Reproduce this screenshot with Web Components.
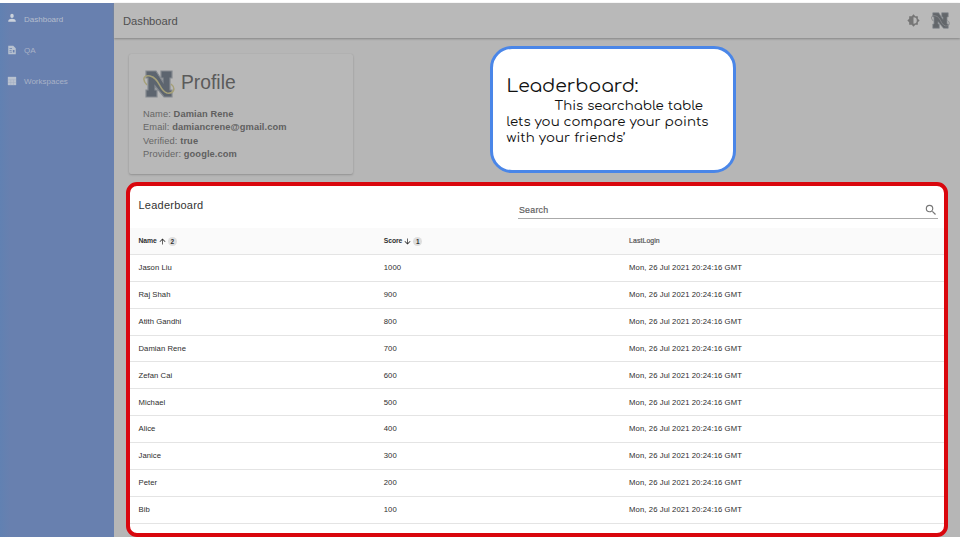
<!DOCTYPE html>
<html lang="en"><head><meta charset="utf-8"><title>Dashboard</title>
<style>
html,body{margin:0;width:960px;height:540px;overflow:hidden;background:#fff}
body{font-family:"Liberation Sans",Arial,sans-serif;position:relative}
</style></head><body>
<dashboard-app></dashboard-app>
<script>
const define=(name,html,setup)=>customElements.define(name,class extends HTMLElement{
  connectedCallback(){
    if(this.shadowRoot)return;
    this.attachShadow({mode:'open'}).innerHTML=html;
    if(setup)setup.call(this,this.shadowRoot);
  }
});

define('n-logo',`<style>:host{display:block;width:32px;height:32px;color:#5d656f}svg{display:block;width:100%;height:100%}</style>
<svg viewBox="0 0 32 32"><path d="M4 3h9l7 11V10h-2V3h11v7h-2v12h2v7h-8L12 18v4h2v7H3v-7h2V10H3V3Z" fill="currentColor" stroke="#858a90" stroke-width="1.2"/>
<path class="r" d="M4 17C-1 12 0 7 7 8C17 10 16 23 24 25C31 26 33 20 28 16" fill="none" stroke="#a5a078" stroke-width="1.5"/></svg>`,
function(r){if(this.hasAttribute('plain'))r.querySelector('.r').setAttribute('stroke','#85878a')});

const icons={
 person:'<path d="M12 12c2.2 0 4-1.8 4-4V6c0-2.200-1.800-4-4-4S8 3.800 8 6v2c0 2.200 1.800 4 4 4zm0 2c-4 0-9 2-9 5v2h18v-2c0-3-5-5-9-5z"/>',
 doc:'<path fill-rule="evenodd" d="M3 2h12l6 6v14H3zM6 7v2h6V7zm0 5v2h5v-2zm0 4v2h6v-2zm8-4v6h4v-6z"/>',
 grid:'<path d="M2 2h20v20H2z"/><path d="M2 9h20M2 15.500h20M9 9v13M15.500 9v13" fill="none" stroke="#9daac1" stroke-width="1"/>',
 bright:'<path d="M20 8.690V4h-4.690L12 .690 8.690 4H4v4.690L.690 12 4 15.310V20h4.690L12 23.310 15.310 20H20v-4.690L23.310 12z"/><path d="M12 6a6 6 0 0 1 0 12z" fill="#b9b9b9"/>',
 search:'<path d="M15.500 14h-.790l-.280-.270A6.470 6.470 0 0 0 16 9.500 6.500 6.500 0 1 0 9.500 16c1.610 0 3.090-.590 4.230-1.570l.270.280v.790l5 4.990L20.490 19zm-6 0a4.500 4.500 0 1 1 0-9 4.500 4.500 0 0 1 0 9z"/>',
 up:'<path d="M4 12l1.410 1.410L11 7.830V20h2V7.830l5.580 5.590L20 12l-8-8z"/>',
 down:'<path d="M20 12l-1.410-1.410L13 16.170V4h-2v12.170l-5.580-5.590L4 12l8 8z"/>'};
define('ui-icon',`<style>:host{display:block;flex:none;width:10px;height:10px}svg{display:block;width:100%;height:100%;fill:currentColor}</style><svg viewBox="0 0 24 24"></svg>`,
function(r){r.querySelector('svg').innerHTML=icons[this.getAttribute('name')]});

define('nav-item',`<style>:host{display:flex;box-sizing:border-box;align-items:center;height:31.400px;padding:0 0 1px 6.500px;gap:7.500px;color:#a8b2c7;font-size:8px;line-height:10px}ui-icon{color:#b9c2d0}span{padding-top:3px}:host([active]){color:#b4bdcd}:host([active]) ui-icon{color:#ccd2dc}</style><ui-icon></ui-icon><span><slot></slot></span>`,
function(r){r.querySelector('ui-icon').replaceWith(Object.assign(document.createElement('template'),{innerHTML:`<ui-icon name="${this.getAttribute('icon')}"></ui-icon>`}).content)});
define('side-nav',`<style>:host{display:block;box-sizing:border-box;background:linear-gradient(90deg,#6181b2,#6880af 9%,#6880af)}</style><slot></slot>`);
define('top-bar',`<style>:host{display:flex;box-sizing:border-box;height:35px;align-items:center;padding:0 10px 0 9px;background:#b9b9b9;box-shadow:0 1px 2px #858585;color:#505050;font-size:11.200px}span{flex:1}ui-icon{width:13px;height:13px;color:#767676;margin-right:11px}n-logo{width:19px;height:19px;color:#63676b}</style><span><slot></slot></span><ui-icon name="bright"></ui-icon><n-logo plain></n-logo>`);
define('profile-card',`<style>:host{display:block;box-sizing:border-box;width:224px;height:120px;padding:14px 14px;background:#b8b8b8;border-radius:2px;box-shadow:0 1px 2px #929292,0 0 1px #a4a4a4;color:#666}header{display:flex;align-items:center;gap:6px;height:31px;color:#5b5b5b}h2{margin:-1px 0 0;font:400 19.300px/30px "Liberation Sans",Arial,sans-serif}p{margin:9px 0 0;font-size:9.300px;line-height:13.400px;letter-spacing:.1px}b{color:#606060}</style>
<header><n-logo></n-logo><h2>Profile</h2></header>
<p>Name: <b>Damian Rene</b><br>Email: <b>damiancrene@gmail.com</b><br>Verified: <b>true</b><br>Provider: <b>google.com</b></p>`);
define('search-field',`<style>:host{display:flex;box-sizing:border-box;align-items:center;width:420px;height:18px;border-bottom:1px solid #aaa;color:#606060;font-size:8.800px;letter-spacing:.25px;-webkit-text-stroke:.2px}span{flex:1;padding-left:1px}ui-icon{width:14px;height:14px;color:#777}</style><span><slot></slot></span><ui-icon name="search"></ui-icon>`);
define('leader-row',`<style>:host{display:grid;box-sizing:border-box;grid-template-columns:245.300px 245.300px 1fr;align-items:center;height:26.870px;padding:.6px 0 0 8.500px;border-bottom:1px solid #e4e4e4;font-size:7.700px;line-height:10px;letter-spacing:.04px;color:#2d2d2d}::slotted(:last-child){letter-spacing:.09px}</style><slot></slot>`);
define('sort-label',`<style>:host{display:flex;align-items:center;gap:1px;font-weight:700;font-size:6.800px;letter-spacing:-.08px;color:#303030}ui-icon{width:9px;height:9px}i{display:grid;place-items:center;width:9px;height:9px;border-radius:50%;background:#dedede;font:600 6.500px/9px "Liberation Sans",sans-serif}</style><span><slot></slot></span>`,
function(r){r.innerHTML+=`<ui-icon name="${this.getAttribute('dir')}"></ui-icon><i>${this.getAttribute('rank')}</i>`});
define('leader-board',`<style>:host{display:block;box-sizing:border-box;width:822px;height:355px;border:4px solid #d9060d;border-radius:11px;background:#fff;overflow:hidden}header{display:flex;justify-content:space-between;height:41.500px;padding:0 6px 0 8.500px}h3{margin:10.500px 0 0;font:400 11px/16px "Liberation Sans",Arial,sans-serif;letter-spacing:.23px;color:#333}search-field{margin-top:15px}.head{background:#fafafa;height:27.500px}.last{font-size:6.900px;color:#555;-webkit-text-stroke:.2px}</style>
<header><h3>Leaderboard</h3><search-field>Search</search-field></header>
<leader-row class="head"><sort-label dir="up" rank="2">Name</sort-label><sort-label dir="down" rank="1">Score</sort-label><span class="last">LastLogin</span></leader-row><section></section>`,
function(r){r.querySelector('section').innerHTML=['Jason Liu','Raj Shah','Atith Gandhi','Damian Rene','Zefan Cai','Michael','Alice','Janice','Peter','Bib'].map((n,i)=>`<leader-row><span>${n}</span><span>${1000-i*100}</span><span>Mon, 26 Jul 2021 20:24:16 GMT</span></leader-row>`).join('')});
define('tour-callout',`<style>:host{display:block;box-sizing:border-box;width:246px;height:127px;border:3px solid #4a86e8;border-radius:22px;background:#fff;padding:26px 0 0 13.500px;color:#111;font-family:Comfortaa,Quicksand,Lato,sans-serif}h1{margin:0;font-size:18.700px;font-weight:400;line-height:23px;white-space:nowrap}p{margin:0;font-size:13.300px;line-height:16px;font-weight:400}p span{display:block;white-space:nowrap;width:max-content}.a{margin-left:48px}</style>
<h1>Leaderboard:</h1><p><span class="a">This searchable table</span><span class="b">lets you compare your points</span><span class="c">with your friends’</span></p>`,
function(r){
  const widths={h1:132,'.a':148.500,'.b':202,'.c':119};
  for(const [s,w] of Object.entries(widths)){
    const e=r.querySelector(s);e.style.width='max-content';
    const n=e.textContent.length;
    e.style.letterSpacing=(w-e.getBoundingClientRect().width)/n+'px';
  }
});
define('dashboard-app',`<style>:host{display:grid;box-sizing:border-box;grid-template-columns:114px 1fr;height:540px;padding:3px 0;position:relative;background:#fff}main{background:#b6b6b6;min-width:0;height:534px}.body{padding:16px 12px 0 12px}profile-card{margin:0 0 8px 3px}tour-callout{position:absolute;left:490px;top:46px}</style>
<side-nav><nav-item icon="person" active>Dashboard</nav-item><nav-item icon="doc">QA</nav-item><nav-item icon="grid">Workspaces</nav-item></side-nav>
<main><top-bar>Dashboard</top-bar><div class="body"><profile-card></profile-card><leader-board></leader-board></div></main>
<tour-callout></tour-callout>`);
</script></body></html>
